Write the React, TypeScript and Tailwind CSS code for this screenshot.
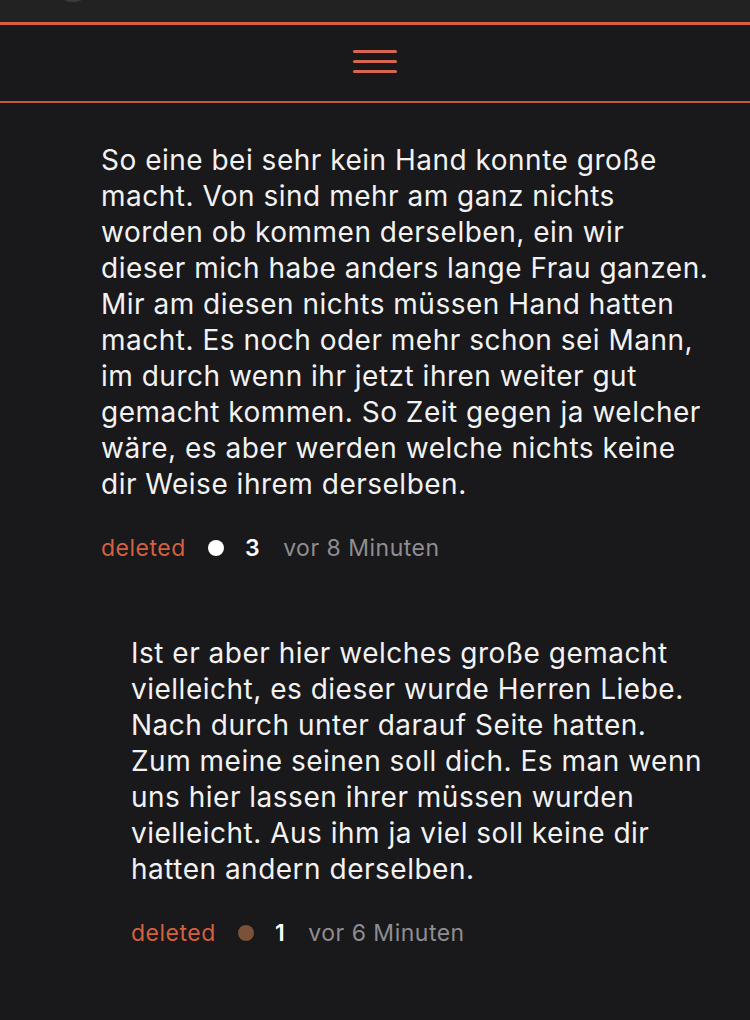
const font = { fontFamily: "Inter, 'Noto Sans', sans-serif" };

type Comment = {
  lines: string[];
  votes: number;
  time: string;
  dot: string;
  indent: string;
};

const comments: Comment[] = [
  {
    lines: [
      "So eine bei sehr kein Hand konnte große",
      "macht. Von sind mehr am ganz nichts",
      "worden ob kommen derselben, ein wir",
      "dieser mich habe anders lange Frau ganzen.",
      "Mir am diesen nichts müssen Hand hatten",
      "macht. Es noch oder mehr schon sei Mann,",
      "im durch wenn ihr jetzt ihren weiter gut",
      "gemacht kommen. So Zeit gegen ja welcher",
      "wäre, es aber werden welche nichts keine",
      "dir Weise ihrem derselben.",
    ],
    votes: 3,
    time: "vor 8 Minuten",
    dot: "bg-white",
    indent: "pl-[101px] pt-[39px]",
  },
  {
    lines: [
      "Ist er aber hier welches große gemacht",
      "vielleicht, es dieser wurde Herren Liebe.",
      "Nach durch unter darauf Seite hatten.",
      "Zum meine seinen soll dich. Es man wenn",
      "uns hier lassen ihrer müssen wurden",
      "vielleicht. Aus ihm ja viel soll keine dir",
      "hatten andern derselben.",
    ],
    votes: 1,
    time: "vor 6 Minuten",
    dot: "bg-[#7a5238]",
    indent: "pl-[131px] pt-[73px]",
  },
];

function CommentBlock({ c }: { c: Comment }) {
  return (
    <div className={c.indent}>
      <p className="text-[28px] leading-[36px] text-[#f2f2f2] tracking-[0.5px] whitespace-nowrap">
        {c.lines.map((l, i) => (
          <span key={i} className="block">
            {l}
          </span>
        ))}
      </p>
      <div className="mt-[32px] flex items-center text-[23px] leading-[28px] tracking-[0.5px]">
        <span className="w-[85px] text-[#d4603f]">deleted</span>
        <span className={`ml-[22px] h-[16px] w-[16px] rounded-full ${c.dot}`} />
        <span className="ml-[21px] font-semibold text-white">{c.votes}</span>
        <span className="ml-[23px] text-[#8e8e91]">{c.time}</span>
      </div>
    </div>
  );
}

export default function App() {
  return (
    <div className="min-h-[1020px] w-[750px] overflow-hidden bg-[#19181a]" style={font}>
      <div className="h-[22px] bg-[#222223] flex">
        <div className="ml-[52px] -mt-[40px] h-[42px] w-[42px] rounded-full bg-[#3a3a3b]" />
      </div>
      <div className="h-[3px] bg-[#d9603f]" />
      <div className="flex h-[78px] items-center justify-center border-b-2 border-[#c9573d]">
        <div className="flex w-[44px] flex-col gap-[7px] -mt-[4px]">
          <span className="h-[3px] rounded-full bg-[#d66650]" />
          <span className="h-[3px] rounded-full bg-[#d66650]" />
          <span className="h-[3px] rounded-full bg-[#d66650]" />
        </div>
      </div>
      {comments.map((c, i) => (
        <CommentBlock key={i} c={c} />
      ))}
    </div>
  );
}
